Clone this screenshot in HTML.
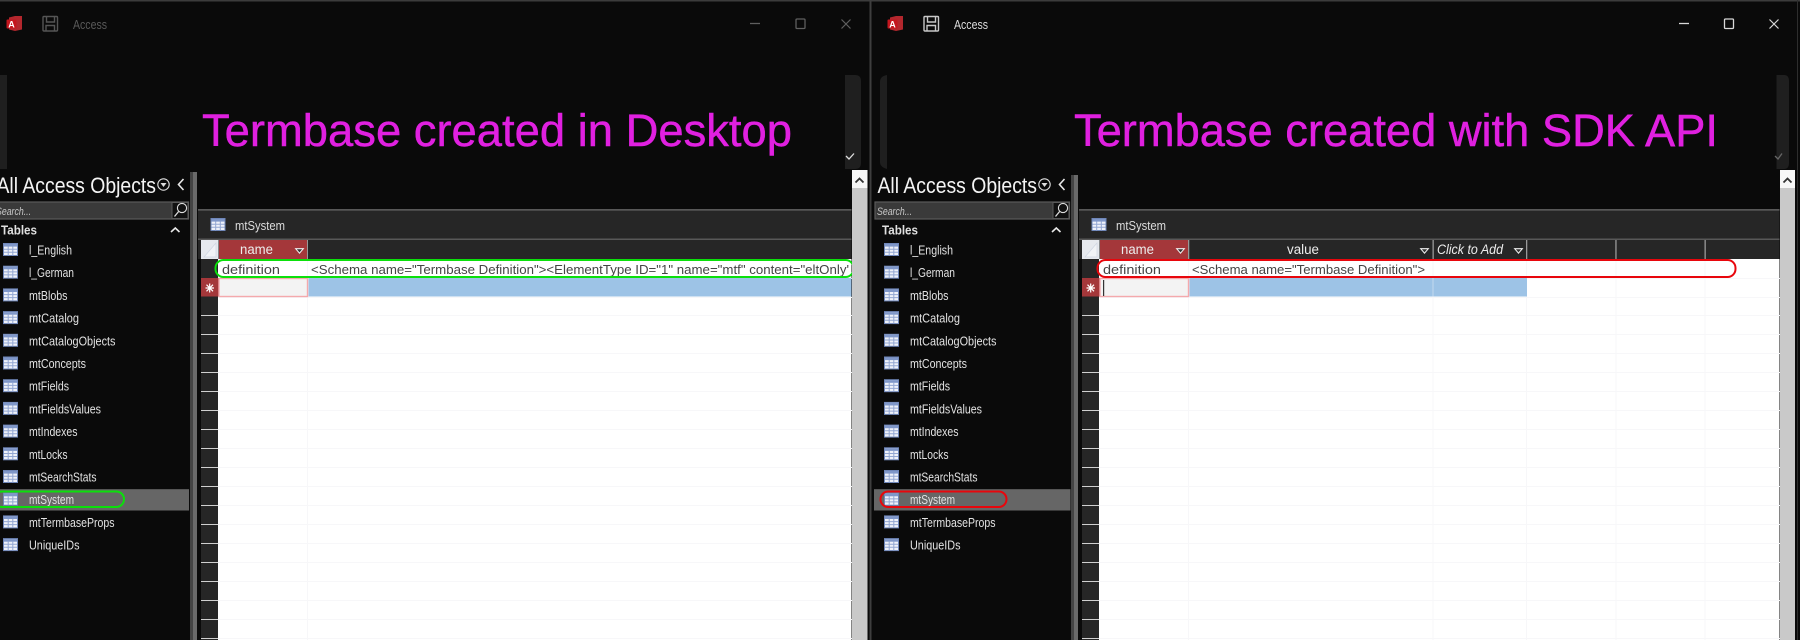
<!DOCTYPE html>
<html><head><meta charset="utf-8"><title>Access Termbase comparison</title>
<style>
html,body{margin:0;padding:0;background:#0a0a0a;width:1800px;height:640px;overflow:hidden}
svg{display:block;position:absolute;left:0;top:0;filter:blur(.35px)}
text{font-family:"Liberation Sans",sans-serif}
.it{font-size:12.5px;fill:#e2e2e2}
.cell{font-size:13.3px;fill:#444}
.mag{font-size:45px;fill:#e020e0;stroke:#e020e0;stroke-width:.45px}
.hd{font-size:13.5px;fill:#ececec}
.ai{font-size:9px;font-weight:bold;fill:#fff}
</style></head><body>
<svg width="1800" height="640" viewBox="0 0 1800 640" xmlns="http://www.w3.org/2000/svg">
<defs>
<symbol id="tb" viewBox="0 0 15 13" width="15" height="13" overflow="visible">
<rect x=".5" y=".5" width="14" height="12" fill="#eef1f9" stroke="#6f86b8"/>
<rect x="1" y="1" width="13" height="2.6" fill="#7f97c9"/>
<path d="M1 6.2H14M1 9.2H14M5.2 3.5V12.5M9.8 3.5V12.5" stroke="#93a7d2" stroke-width="1" fill="none"/>
</symbol>
<symbol id="tri" viewBox="0 0 9 6" width="9" height="6" overflow="visible">
<path d="M.7.7H8.3L4.5 5.2Z" fill="#333" stroke="#eee" stroke-width="1.1"/>
</symbol>
</defs>

<rect width="1800" height="640" fill="#0a0a0a"/>
<rect width="1800" height="1.5" fill="#3c3c3c"/>

<!-- LEFT WINDOW -->
<path d="M9 17.5L15 16H22V29.5L15 31L9 29.5Z" fill="#b3272d"/>
<rect x="6.5" y="19.5" width="10" height="9" rx="1" fill="#c4161e"/>
<text class="ai" x="8.2" y="27.3">A</text>
<g fill="none" stroke="#555" stroke-width="1.4">
<rect x="43" y="16.5" width="14.5" height="14.5" rx="1"/>
<path d="M46.5 17V22H54.5V17M46 31V25.5H54.5V31"/>
</g>
<text x="73" y="29" font-size="12.5" fill="#5a5a5a" textLength="34" lengthAdjust="spacingAndGlyphs">Access</text>
<path d="M750 23.5H760" stroke="#5f5f5f" stroke-width="1.3"/>
<rect x="796" y="19" width="9" height="9.5" rx="1" fill="none" stroke="#5f5f5f" stroke-width="1.3"/>
<path d="M841.5 19.5L850.5 28.5M850.5 19.5L841.5 28.5" stroke="#5f5f5f" stroke-width="1.2"/>

<path d="M0 75H7V169H0Z" fill="#1f1f1f"/>
<path d="M845 75H855Q861 75 861 81V163Q861 169 855 169H845Z" fill="#1f1f1f"/>
<path d="M846 156L849 159L854 153.5" fill="none" stroke="#ddd" stroke-width="1.3"/>

<text class="mag" x="202" y="146" textLength="590" lengthAdjust="spacingAndGlyphs">Termbase created in Desktop</text>

<!-- left nav -->
<text x="-3.5" y="193" font-size="22" fill="#f4f4f4" textLength="159.5" lengthAdjust="spacingAndGlyphs">All Access Objects</text>
<circle cx="163.5" cy="184.5" r="5.7" fill="none" stroke="#ddd" stroke-width="1.1"/>
<path d="M160.5 183H166.5L163.5 187Z" fill="#ddd"/>
<path d="M183.5 179L178.5 184.5L183.5 190" fill="none" stroke="#e8e8e8" stroke-width="1.6"/>
<rect x="190" y="172" width="3" height="468" fill="#444"/>
<rect x="193" y="172" width="4" height="468" fill="#6a6a6a"/>
<rect x="-2" y="202" width="190.5" height="17" fill="#3a3a3a" stroke="#5a5a5a" stroke-width="1.2"/>
<rect x="172" y="202.5" width="16" height="16" fill="#111" stroke="#5a5a5a"/>
<circle cx="182" cy="208" r="4.6" fill="none" stroke="#ddd" stroke-width="1.1"/>
<path d="M178.6 211.5L174.5 216.5" stroke="#ddd" stroke-width="1.3"/>
<text x="-4" y="215" font-size="11" font-style="italic" fill="#c8c8c8" textLength="35" lengthAdjust="spacingAndGlyphs">Search...</text>
<text x="1" y="234.5" font-size="13" font-weight="bold" fill="#e0e0e0" textLength="36" lengthAdjust="spacingAndGlyphs">Tables</text>
<path d="M171 232L175.3 228L179.5 232" fill="none" stroke="#e8e8e8" stroke-width="1.6"/>
<rect x="0" y="489" width="189" height="21.5" fill="#666"/>
<rect x="0" y="489" width="189" height="1" fill="#555"/>
<use href="#tb" x="3" y="243"/><text class="it" x="29" y="254.5" textLength="43" lengthAdjust="spacingAndGlyphs">l_English</text>
<use href="#tb" x="3" y="265.7"/><text class="it" x="29" y="277.2" textLength="45" lengthAdjust="spacingAndGlyphs">l_German</text>
<use href="#tb" x="3" y="288.4"/><text class="it" x="29" y="299.9" textLength="38.5" lengthAdjust="spacingAndGlyphs">mtBlobs</text>
<use href="#tb" x="3" y="311.1"/><text class="it" x="29" y="322.6" textLength="50" lengthAdjust="spacingAndGlyphs">mtCatalog</text>
<use href="#tb" x="3" y="333.8"/><text class="it" x="29" y="345.3" textLength="86.5" lengthAdjust="spacingAndGlyphs">mtCatalogObjects</text>
<use href="#tb" x="3" y="356.5"/><text class="it" x="29" y="368" textLength="57" lengthAdjust="spacingAndGlyphs">mtConcepts</text>
<use href="#tb" x="3" y="379.2"/><text class="it" x="29" y="390.7" textLength="40" lengthAdjust="spacingAndGlyphs">mtFields</text>
<use href="#tb" x="3" y="401.9"/><text class="it" x="29" y="413.4" textLength="72" lengthAdjust="spacingAndGlyphs">mtFieldsValues</text>
<use href="#tb" x="3" y="424.6"/><text class="it" x="29" y="436.1" textLength="48.5" lengthAdjust="spacingAndGlyphs">mtIndexes</text>
<use href="#tb" x="3" y="447.3"/><text class="it" x="29" y="458.8" textLength="38.5" lengthAdjust="spacingAndGlyphs">mtLocks</text>
<use href="#tb" x="3" y="470"/><text class="it" x="29" y="481.5" textLength="67.5" lengthAdjust="spacingAndGlyphs">mtSearchStats</text>
<use href="#tb" x="3" y="492.7"/><text class="it" x="29" y="504.2" textLength="45" lengthAdjust="spacingAndGlyphs">mtSystem</text>
<use href="#tb" x="3" y="515.4"/><text class="it" x="29" y="526.9" textLength="85.5" lengthAdjust="spacingAndGlyphs">mtTermbaseProps</text>
<use href="#tb" x="3" y="538.1"/><text class="it" x="29" y="549.6" textLength="50.5" lengthAdjust="spacingAndGlyphs">UniqueIDs</text>
<rect x="-6" y="491.5" width="130" height="15.5" rx="7.7" fill="none" stroke="#0be00b" stroke-width="2"/>

<!-- left main -->
<rect x="198" y="209" width="653.5" height="50" fill="#262626"/>
<rect x="198" y="209" width="653.5" height="1.7" fill="#585858"/>
<rect x="198" y="238.5" width="653.5" height="1.5" fill="#585858"/>
<use href="#tb" x="210.5" y="218"/>
<text x="235" y="230" font-size="12.5" fill="#dcdcdc" textLength="50" lengthAdjust="spacingAndGlyphs">mtSystem</text>
<rect x="201" y="240" width="17.5" height="19" fill="#e6e9ee"/>
<path d="M204 257L216 243V257Z" fill="#f1f3f6" stroke="#cfd6e2" stroke-width=".7"/>
<rect x="219" y="240" width="88" height="19" fill="#a4373a"/>
<rect x="307" y="240" width="1" height="19" fill="#999"/>
<text class="hd" x="240" y="254" textLength="33" lengthAdjust="spacingAndGlyphs">name</text>
<use href="#tri" x="295" y="248"/>
<rect x="201" y="259" width="17.5" height="381" fill="#262626"/>
<rect x="218" y="259" width="633.5" height="381" fill="#fff"/>
<g stroke="#f7f7f9" stroke-width="1">
<path d="M218 278.5H852M218 297.5H852M218 315.5H852M218 334.5H852M218 353.5H852M218 372.5H852M218 391.5H852M218 410.5H852M218 429.5H852M218 448.5H852M218 467.5H852M218 486.5H852M218 505.5H852M218 524.5H852M218 543.5H852M218 562.5H852M218 581.5H852M218 600.5H852M218 619.5H852M218 638.5H852"/>
<path d="M307.5 259V640"/>
</g>
<g stroke="#d0d0d0" stroke-width="1">
<path d="M201 315.5H218M201 334.5H218M201 353.5H218M201 372.5H218M201 391.5H218M201 410.5H218M201 429.5H218M201 448.5H218M201 467.5H218M201 486.5H218M201 505.5H218M201 524.5H218M201 543.5H218M201 562.5H218M201 581.5H218M201 600.5H218M201 619.5H218M201 638.5H218"/>
</g>
<rect x="201" y="278" width="17.5" height="18.5" fill="#a4373a"/>
<path d="M205.5 288H214M209.7 283.5V292.5M206.5 284.7L213 291.3M213 284.7L206.5 291.3" stroke="#fff" stroke-width="1.2"/>
<rect x="219" y="278.5" width="88.5" height="18" fill="#f3f3f3" stroke="#f4a9ac" stroke-width="1.4"/>
<rect x="308.5" y="278" width="543" height="18.5" fill="#9dc3e6"/>
<text class="cell" x="222" y="274" textLength="58" lengthAdjust="spacingAndGlyphs">definition</text>
<text class="cell" x="311" y="274" textLength="538" lengthAdjust="spacingAndGlyphs">&lt;Schema name="Termbase Definition"&gt;&lt;ElementType ID="1" name="mtf" content="eltOnly'</text>
<rect x="215.5" y="260" width="638" height="17" rx="8" fill="none" stroke="#0be00b" stroke-width="2"/>

<!-- left scrollbar -->
<rect x="852" y="170" width="15.5" height="470" fill="#c9c9c9"/>
<rect x="852" y="170" width="15.5" height="18" fill="#f7f7f7"/>
<path d="M855.5 182.5L859.5 178.5L863.5 182.5" fill="none" stroke="#333" stroke-width="1.8"/>
<rect x="869.5" y="0" width="2" height="640" fill="#3e3e3e"/>

<!-- RIGHT WINDOW -->
<path d="M890 17.5L896 16H903V29.5L896 31L890 29.5Z" fill="#b3272d"/>
<rect x="887.5" y="19.5" width="10" height="9" rx="1" fill="#c4161e"/>
<text class="ai" x="889.2" y="27.3">A</text>
<g fill="none" stroke="#c8c8c8" stroke-width="1.4">
<rect x="924" y="16.5" width="14.5" height="14.5" rx="1"/>
<path d="M927.5 17V22H935.5V17M927 31V25.5H935.5V31"/>
</g>
<text x="954" y="29" font-size="12.5" fill="#dedede" textLength="34" lengthAdjust="spacingAndGlyphs">Access</text>
<path d="M1679 23.5H1689" stroke="#d8d8d8" stroke-width="1.3"/>
<rect x="1724.5" y="19" width="9" height="9.5" rx="1" fill="none" stroke="#d8d8d8" stroke-width="1.3"/>
<path d="M1769.5 19.5L1778.5 28.5M1778.5 19.5L1769.5 28.5" stroke="#d8d8d8" stroke-width="1.2"/>

<path d="M887 75V169Q880 167 880 162V82Q880 76 887 75Z" fill="#1f1f1f"/>
<path d="M1776.5 75H1784Q1789 75 1789 81V163Q1789 169 1784 169H1776.5Z" fill="#1f1f1f"/>
<path d="M1775 156L1778 159L1782 153.5" fill="none" stroke="#666" stroke-width="1.3"/>

<text class="mag" x="1074" y="146" textLength="644" lengthAdjust="spacingAndGlyphs">Termbase created with SDK API</text>

<!-- right nav -->
<text x="877.5" y="193" font-size="22" fill="#f4f4f4" textLength="159.5" lengthAdjust="spacingAndGlyphs">All Access Objects</text>
<circle cx="1044.5" cy="184.5" r="5.7" fill="none" stroke="#ddd" stroke-width="1.1"/>
<path d="M1041.5 183H1047.5L1044.5 187Z" fill="#ddd"/>
<path d="M1064.5 179L1059.5 184.5L1064.5 190" fill="none" stroke="#e8e8e8" stroke-width="1.6"/>
<rect x="1071" y="175" width="3" height="465" fill="#444"/>
<rect x="1074" y="175" width="4" height="465" fill="#6a6a6a"/>
<rect x="875" y="202" width="194.5" height="17" fill="#3a3a3a" stroke="#5a5a5a" stroke-width="1.2"/>
<rect x="1053" y="202.5" width="16" height="16" fill="#111" stroke="#5a5a5a"/>
<circle cx="1063" cy="208" r="4.6" fill="none" stroke="#ddd" stroke-width="1.1"/>
<path d="M1059.6 211.5L1055.5 216.5" stroke="#ddd" stroke-width="1.3"/>
<text x="877" y="215" font-size="11" font-style="italic" fill="#c8c8c8" textLength="35" lengthAdjust="spacingAndGlyphs">Search...</text>
<text x="882" y="234.5" font-size="13" font-weight="bold" fill="#e0e0e0" textLength="36" lengthAdjust="spacingAndGlyphs">Tables</text>
<path d="M1052 232L1056.3 228L1060.5 232" fill="none" stroke="#e8e8e8" stroke-width="1.6"/>
<rect x="874" y="489" width="196.5" height="21.5" fill="#666"/>
<rect x="874" y="489" width="196.5" height="1" fill="#555"/>
<use href="#tb" x="884" y="243"/><text class="it" x="910" y="254.5" textLength="43" lengthAdjust="spacingAndGlyphs">l_English</text>
<use href="#tb" x="884" y="265.7"/><text class="it" x="910" y="277.2" textLength="45" lengthAdjust="spacingAndGlyphs">l_German</text>
<use href="#tb" x="884" y="288.4"/><text class="it" x="910" y="299.9" textLength="38.5" lengthAdjust="spacingAndGlyphs">mtBlobs</text>
<use href="#tb" x="884" y="311.1"/><text class="it" x="910" y="322.6" textLength="50" lengthAdjust="spacingAndGlyphs">mtCatalog</text>
<use href="#tb" x="884" y="333.8"/><text class="it" x="910" y="345.3" textLength="86.5" lengthAdjust="spacingAndGlyphs">mtCatalogObjects</text>
<use href="#tb" x="884" y="356.5"/><text class="it" x="910" y="368" textLength="57" lengthAdjust="spacingAndGlyphs">mtConcepts</text>
<use href="#tb" x="884" y="379.2"/><text class="it" x="910" y="390.7" textLength="40" lengthAdjust="spacingAndGlyphs">mtFields</text>
<use href="#tb" x="884" y="401.9"/><text class="it" x="910" y="413.4" textLength="72" lengthAdjust="spacingAndGlyphs">mtFieldsValues</text>
<use href="#tb" x="884" y="424.6"/><text class="it" x="910" y="436.1" textLength="48.5" lengthAdjust="spacingAndGlyphs">mtIndexes</text>
<use href="#tb" x="884" y="447.3"/><text class="it" x="910" y="458.8" textLength="38.5" lengthAdjust="spacingAndGlyphs">mtLocks</text>
<use href="#tb" x="884" y="470"/><text class="it" x="910" y="481.5" textLength="67.5" lengthAdjust="spacingAndGlyphs">mtSearchStats</text>
<use href="#tb" x="884" y="492.7"/><text class="it" x="910" y="504.2" textLength="45" lengthAdjust="spacingAndGlyphs">mtSystem</text>
<use href="#tb" x="884" y="515.4"/><text class="it" x="910" y="526.9" textLength="85.5" lengthAdjust="spacingAndGlyphs">mtTermbaseProps</text>
<use href="#tb" x="884" y="538.1"/><text class="it" x="910" y="549.6" textLength="50.5" lengthAdjust="spacingAndGlyphs">UniqueIDs</text>
<rect x="880.5" y="491.5" width="126" height="15.5" rx="7.7" fill="none" stroke="#e8060c" stroke-width="2"/>

<!-- right main -->
<rect x="1079" y="209" width="700.5" height="50" fill="#262626"/>
<rect x="1079" y="209" width="700.5" height="1.7" fill="#585858"/>
<rect x="1079" y="238.5" width="700.5" height="1.5" fill="#585858"/>
<use href="#tb" x="1091.5" y="218"/>
<text x="1116" y="230" font-size="12.5" fill="#dcdcdc" textLength="50" lengthAdjust="spacingAndGlyphs">mtSystem</text>
<rect x="1082" y="240" width="17.5" height="19" fill="#e6e9ee"/>
<path d="M1085 257L1097 243V257Z" fill="#f1f3f6" stroke="#cfd6e2" stroke-width=".7"/>
<rect x="1100" y="240" width="88" height="19" fill="#a4373a"/>
<text class="hd" x="1121" y="254" textLength="33" lengthAdjust="spacingAndGlyphs">name</text>
<use href="#tri" x="1176" y="248"/>
<text class="hd" x="1287" y="254" textLength="32" lengthAdjust="spacingAndGlyphs">value</text>
<use href="#tri" x="1420" y="248"/>
<text x="1437" y="254" font-size="13.5" font-style="italic" fill="#ececec" textLength="66" lengthAdjust="spacingAndGlyphs">Click to Add</text>
<use href="#tri" x="1514" y="248"/>
<g fill="#999">
<rect x="1188" y="240" width="1.3" height="19"/>
<rect x="1432.5" y="240" width="1.3" height="19"/>
<rect x="1526" y="240" width="1.3" height="19"/>
<rect x="1615.3" y="240" width="1.3" height="19"/>
<rect x="1704.5" y="240" width="1.3" height="19"/>
</g>
<rect x="1082" y="259" width="17.5" height="381" fill="#262626"/>
<rect x="1099" y="259" width="680.5" height="381" fill="#fff"/>
<g stroke="#f7f7f9" stroke-width="1">
<path d="M1099 278.5H1780M1099 297.5H1780M1099 315.5H1780M1099 334.5H1780M1099 353.5H1780M1099 372.5H1780M1099 391.5H1780M1099 410.5H1780M1099 429.5H1780M1099 448.5H1780M1099 467.5H1780M1099 486.5H1780M1099 505.5H1780M1099 524.5H1780M1099 543.5H1780M1099 562.5H1780M1099 581.5H1780M1099 600.5H1780M1099 619.5H1780M1099 638.5H1780"/>
<path d="M1188.5 259V640M1433 259V640M1526.5 259V640M1616 259V640M1705 259V640"/>
</g>
<g stroke="#d0d0d0" stroke-width="1">
<path d="M1082 315.5H1099M1082 334.5H1099M1082 353.5H1099M1082 372.5H1099M1082 391.5H1099M1082 410.5H1099M1082 429.5H1099M1082 448.5H1099M1082 467.5H1099M1082 486.5H1099M1082 505.5H1099M1082 524.5H1099M1082 543.5H1099M1082 562.5H1099M1082 581.5H1099M1082 600.5H1099M1082 619.5H1099M1082 638.5H1099"/>
</g>
<rect x="1082" y="278" width="17.5" height="18.5" fill="#a4373a"/>
<path d="M1086.5 288H1095M1090.7 283.5V292.5M1087.5 284.7L1094 291.3M1094 284.7L1087.5 291.3" stroke="#fff" stroke-width="1.2"/>
<rect x="1100" y="278.5" width="88.5" height="18" fill="#f3f3f3" stroke="#f4a9ac" stroke-width="1.4"/>
<rect x="1103" y="280" width="1.2" height="16" fill="#333"/>
<rect x="1189.5" y="278" width="337.5" height="18.5" fill="#9dc3e6"/>
<rect x="1432.5" y="278" width="1" height="18.5" fill="#c2d9ef"/>
<text class="cell" x="1103" y="274" textLength="58" lengthAdjust="spacingAndGlyphs">definition</text>
<text class="cell" x="1192" y="274" textLength="233" lengthAdjust="spacingAndGlyphs">&lt;Schema name="Termbase Definition"&gt;</text>
<rect x="1097.5" y="260" width="638" height="17" rx="8" fill="none" stroke="#e8060c" stroke-width="2"/>

<!-- right scrollbar -->
<rect x="1780" y="170" width="15" height="470" fill="#c9c9c9"/>
<rect x="1780" y="170" width="15" height="18" fill="#f7f7f7"/>
<path d="M1783.5 182.5L1787.5 178.5L1791.5 182.5" fill="none" stroke="#333" stroke-width="1.8"/>
<rect x="1797" y="0" width="1" height="640" fill="#2e2e2e"/>
</svg>
</body></html>
